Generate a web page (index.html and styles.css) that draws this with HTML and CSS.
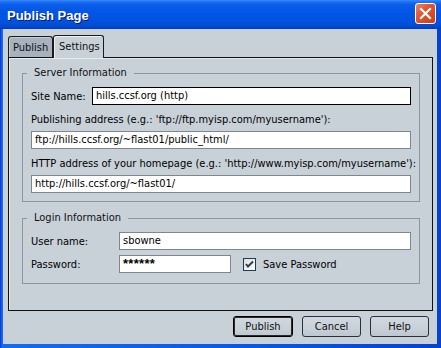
FILE: index.html
```html
<!DOCTYPE html>
<html>
<head>
<meta charset="utf-8">
<link rel="stylesheet" href="styles.css">
</head>
<body>
<div class="window">
  <div class="titlebar">
    <span class="title">Publish Page</span>
    <div class="close">
      <svg width="13" height="13" viewBox="0 0 13 13"><path d="M2 2 L11 11 M11 2 L2 11" stroke="#fff" stroke-width="2.2" stroke-linecap="square"/></svg>
    </div>
  </div>
  <div class="client">
    <div class="tabs">
      <div class="tab">Publish</div>
      <div class="tab active">Settings</div>
    </div>
    <div class="panel">
      <fieldset class="group server">
        <legend>Server Information</legend>
        <div class="gbody">
          <div class="row">
            <span class="lbl site">Site Name:</span>
            <div class="field focus">hills.ccsf.org (http)</div>
          </div>
          <div class="flabel">Publishing address (e.g.: 'ftp://ftp.myisp.com/myusername'):</div>
          <div class="field">ftp://hills.ccsf.org/~flast01/public_html/</div>
          <div class="flabel">HTTP address of your homepage (e.g.: 'http://www.myisp.com/myusername'):</div>
          <div class="field">http://hills.ccsf.org/~flast01/</div>
        </div>
      </fieldset>
      <fieldset class="group login">
        <legend>Login Information</legend>
        <div class="gbody">
          <div class="row">
            <span class="lbl user">User name:</span>
            <div class="field">sbowne</div>
          </div>
          <div class="row pwrow">
            <span class="lbl user">Password:</span>
            <div class="field pw"><span class="stars">******</span></div>
            <div class="check">
              <svg width="13" height="13" viewBox="0 0 13 13">
                <defs><linearGradient id="cg" x1="0" y1="0" x2="1" y2="1"><stop offset="0" stop-color="#dcdcd7"/><stop offset="1" stop-color="#ffffff"/></linearGradient></defs>
                <rect x="0.5" y="0.5" width="12" height="12" fill="url(#cg)" stroke="#1c3a5a"/>
                <path d="M3 6 L5 8.5 L10 3.5" fill="none" stroke="#2f3f4f" stroke-width="2"/>
              </svg>
              <span>Save Password</span>
            </div>
          </div>
        </div>
      </fieldset>
    </div>
    <div class="buttons">
      <div class="btn default">Publish</div>
      <div class="btn">Cancel</div>
      <div class="btn">Help</div>
    </div>
  </div>
</div>
</body>
</html>
```
FILE: styles.css
```css
* { box-sizing: border-box; }
html, body { margin: 0; padding: 0; }
body {
  font-family: "DejaVu Sans Condensed", "Liberation Sans", Arial, sans-serif;
  font-size: 11px;
  color: #000;
  width: 441px;
  height: 348px;
  overflow: hidden;
}
.window {
  width: 441px;
  height: 348px;
  display: flex;
  flex-direction: column;
  background: linear-gradient(to right, #0831d9 0, #166aee 2px, #0a5be8 50%, #0542d0 100%);
}
.titlebar {
  height: 29px;
  display: flex;
  align-items: center;
  justify-content: space-between;
  padding: 0 5px 0 7px;
  background: linear-gradient(to bottom, #3b8cf7 0, #1a6ef4 2px, #0a5ce8 5px, #0055e5 14px, #0052de 22px, #0048cf 27px, #003bb6 29px);
}
.title {
  font-family: "Liberation Sans", Arial, sans-serif;
  font-weight: bold;
  font-size: 13px;
  color: #fff;
  text-shadow: 1px 1px 0 #0a1a6a;
  margin-top: 1px;
}
.close {
  width: 21px;
  height: 21px;
  border: 1px solid #fff;
  border-radius: 3px;
  background: linear-gradient(135deg, #e8856a 0, #e2552f 40%, #cf3d18 100%);
  display: flex;
  align-items: center;
  justify-content: center;
  margin-bottom: 2px;
}
.client {
  flex: 1;
  margin: 0 4px 4px 3px;
  background: #c8d0d8;
  padding: 6px 4px 0 5px;
  display: flex;
  flex-direction: column;
}
.tabs {
  height: 22px;
  display: flex;
  align-items: flex-end;
}
.tab {
  height: 21px;
  width: 45px;
  padding: 0 0 0 4px;
  border: 1px solid #1a1a1a;
  border-bottom: none;
  border-radius: 3px 3px 0 0;
  background: #a6b2be;
  display: flex;
  align-items: center;
  color: #111;
  box-shadow: inset 1px 1px 0 #c4ccd4;
}
.tab.active {
  height: 23px;
  width: 51px;
  margin-bottom: -1px;
  background: #c8d0d8;
  position: relative;
  z-index: 1;
  padding: 0 0 1px 5px;
  box-shadow: inset 1px 1px 0 #eef1f4;
}
.panel {
  height: 254px;
  border: 1px solid #111;
  box-shadow: inset 1px 1px 0 #e6eaee;
  padding: 8px 12px 0 13px;
}
.group {
  margin: 0;
  padding: 0;
  border: 1px solid #8e959d;
  min-width: 0;
}
.group legend {
  margin-left: 4px;
  padding: 0 7px;
  line-height: 14px;
  color: #111;
}
.gbody {
  padding: 7px 8px 8px 8px;
}
.login { margin-top: 9px; }
.login .gbody { padding: 7px 8px 10px 8px; }
.row {
  display: flex;
  align-items: center;
}
.lbl { flex: none; }
.lbl.site { width: 61px; }
.lbl.user { width: 88px; }
.flabel {
  margin-top: 8px;
  height: 14px;
  line-height: 14px;
  margin-bottom: 4px;
  white-space: nowrap;
}
.field {
  flex: 1;
  height: 18px;
  border: 1px solid #7f868e;
  background: #fff;
  padding: 0 3px;
  line-height: 16px;
  white-space: nowrap;
}
.field.focus { border-color: #000; }
.pwrow { margin-top: 5px; }
.field.pw { flex: none; width: 112px; }
.stars {
  font-family: "Liberation Sans", Arial, sans-serif;
  font-size: 13px;
  font-weight: bold;
  letter-spacing: 0.3px;
  line-height: 16px;
}
.check {
  display: flex;
  align-items: center;
  margin-left: 12px;
  gap: 7px;
}
.check svg { display: block; }
.buttons {
  display: flex;
  justify-content: flex-end;
  gap: 9px;
  margin-top: 5px;
  padding-right: 4px;
}
.btn {
  width: 59px;
  height: 21px;
  border: 1px solid #26313d;
  border-radius: 3px;
  background: linear-gradient(to bottom, #d2d8de 0, #c8d0d8 60%, #bec6cf 100%);
  display: flex;
  align-items: center;
  justify-content: center;
  color: #111;
}
.btn.default {
  width: 60px;
  border-color: #000;
  box-shadow: inset 0 0 0 1px #2a2a2a;
}
```
